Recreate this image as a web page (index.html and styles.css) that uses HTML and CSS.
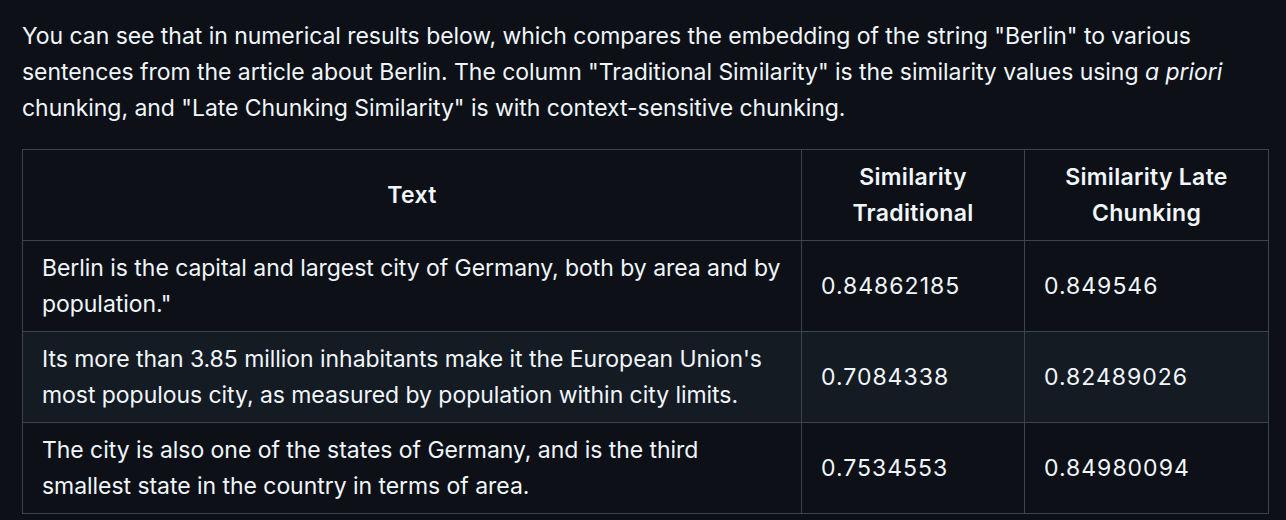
FILE: index.html
```html
<!DOCTYPE html>
<html>
<head>
<meta charset="utf-8">
<link rel="stylesheet" href="styles.css">
</head>
<body>
<div class="markdown">
<p class="intro">You can see that in numerical results below, which compares the embedding of the string "Berlin" to various sentences from the article about Berlin. The column "Traditional Similarity" is the similarity values using <em>a priori</em> chunking, and "Late Chunking Similarity" is with context-sensitive chunking.</p>
<table class="results">
<colgroup>
<col class="col-text">
<col class="col-trad">
<col class="col-late">
</colgroup>
<thead>
<tr><th>Text</th><th>Similarity Traditional</th><th>Similarity Late Chunking</th></tr>
</thead>
<tbody>
<tr><td>Berlin is the capital and largest city of Germany, both by area and by population."</td><td class="num">0.84862185</td><td class="num">0.849546</td></tr>
<tr class="alt"><td>Its more than 3.85 million inhabitants make it the European Union's most populous city, as measured by population within city limits.</td><td class="num">0.7084338</td><td class="num">0.82489026</td></tr>
<tr><td>The city is also one of the states of Germany, and is the third smallest state in the country in terms of area.</td><td class="num">0.7534553</td><td class="num">0.84980094</td></tr>
</tbody>
</table>
</div>
</body>
</html>
```
FILE: styles.css
```css
html, body {
  margin: 0;
  background: #0d1117;
}
body {
  font-family: Inter, "Noto Sans", sans-serif;
  color: #f0f6fc;
  font-size: 23px;
  line-height: 36px;
  letter-spacing: -0.05px;
}
.markdown {
  padding: 18px 18px 0 22px;
}
.intro {
  margin: 0 0 23px 0;
}
.results {
  border-collapse: collapse;
  table-layout: fixed;
  width: 1246px;
}
.col-text { width: 779px; }
.col-trad { width: 223px; }
.col-late { width: 244px; }
.results th,
.results td {
  border: 1px solid #3d444d;
  padding: 9px 19px;
  vertical-align: middle;
}
.results th {
  font-weight: 600;
  letter-spacing: 0.3px;
  text-align: center;
}
.results td {
  text-align: left;
}
.results td.num {
  letter-spacing: 1px;
}
.results tr.alt {
  background: #151b23;
}
```
